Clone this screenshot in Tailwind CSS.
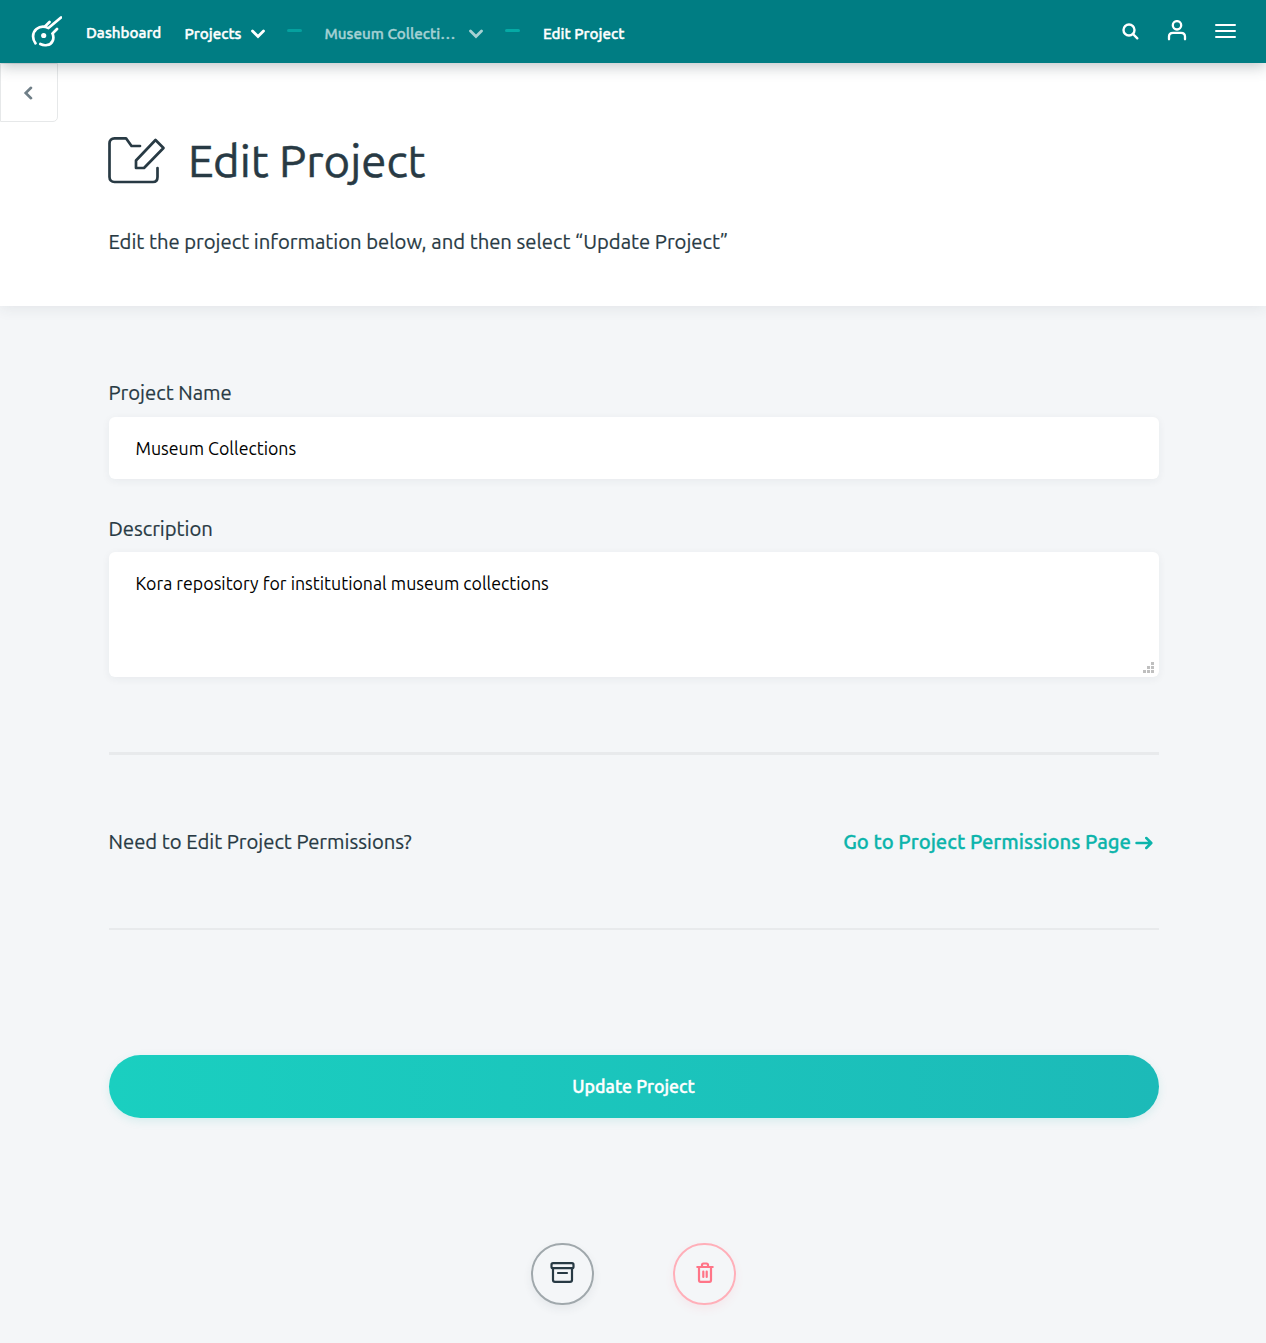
<!DOCTYPE html>
<html lang="en">
<head>
<meta charset="utf-8">
<title>Edit Project</title>
<script src="https://cdn.jsdelivr.net/npm/@tailwindcss/browser@4"></script>
</head>
<body class="min-h-[1343px] overflow-x-hidden bg-[#f4f6f8] font-[Ubuntu,'Noto_Sans',sans-serif] text-[#283a44] [-webkit-text-stroke:0.2px]">
<nav class="relative z-20 flex h-[63px] items-center bg-[#007d83] pl-[30px] pr-[30px] text-[15.19px] font-medium leading-5 whitespace-nowrap text-white shadow-[0_3px_14px_rgba(40,55,64,0.3)] [-webkit-text-stroke:0.4px]">
  <svg class="mt-px size-8" viewBox="0 0 32 32" fill="none" stroke="currentColor" stroke-width="2.700" stroke-linecap="round">
    <path d="M5.500 27.300C2 23 2.300 16.500 6.500 13C10 10.200 14.500 10.200 18.500 12L31 1.500M15.500 10L19.500 6M27 13L22.500 17.500C24.700 22.500 22.500 28.300 17 29C14.500 29.600 12.300 29 10.300 28"/>
    <circle cx="13.700" cy="19.500" r="2.600" fill="currentColor" stroke="none"/>
  </svg>
  <a class="ml-6 w-[98.500px] pt-0.5"><span>Dashboard</span></a>
  <a class="flex w-[102.500px] items-center pt-1"><span class="w-[66.500px]">Projects</span>
    <svg class="h-[10px] w-[14px]" viewBox="0 0 14 10" fill="none" stroke="currentColor" stroke-width="2.800" stroke-linecap="round"><path d="M1.500 2L7 7.600L12.500 2"/></svg></a>
  <span class="mb-[3px] h-[3px] w-[15px] rounded-full bg-[#05a19f]"></span>
  <a class="ml-[22.500px] flex items-center pt-1 text-[#a6d1d3]"><span class="w-[144.500px]">Museum Collecti…</span>
    <svg class="h-[10px] w-[14px]" viewBox="0 0 14 10" fill="none" stroke="currentColor" stroke-width="2.800" stroke-linecap="round"><path d="M1.500 2L7 7.600L12.500 2"/></svg></a>
  <span class="mb-[3px] ml-[22px] h-[3px] w-[15px] rounded-full bg-[#05aaa5]"></span>
  <a class="ml-[23px] pt-1"><span>Edit Project</span></a>
  <div class="ml-auto flex items-center">
    <svg class="size-[17px]" viewBox="0 0 17 17" fill="none" stroke="currentColor" stroke-width="2.400" stroke-linecap="round"><circle cx="7" cy="7" r="5.500"/><path d="M11 11L15.300 15.300"/></svg>
    <svg class="mb-[2px] ml-[28.500px] h-[21px] w-5" viewBox="0 0 20 21" fill="none" stroke="currentColor" stroke-width="2.300" stroke-linecap="round"><circle cx="10" cy="5.300" r="4.200"/><path d="M2 19.300V16.500C2 14 3.500 12.800 6 12.800H14C16.500 12.800 18 14 18 16.500V19.300"/></svg>
    <svg class="mb-[2px] ml-[27px] h-4 w-[22px]" viewBox="0 0 22 16" stroke="currentColor" stroke-width="2" stroke-linecap="round"><path d="M2 2H21M2 8H21M2 14H21"/></svg>
  </div>
</nav>
<header class="relative z-10 flex h-[243px] bg-white shadow-[0_2px_14px_rgba(40,55,64,0.09)]">
  <a class="flex h-[59px] w-[58px] shrink-0 items-center justify-center rounded-br-[5px] border border-[#e6e8e9] pr-0.5 text-[#6f7e87]">
    <svg class="h-[14px] w-[10px]" viewBox="0 0 10 14" fill="none" stroke="currentColor" stroke-width="2.600" stroke-linecap="round"><path d="M8 1.800L2.700 7L8 12.200"/></svg>
  </a>
  <div class="pl-[50.400px] pt-[65px]">
    <h1 class="flex h-[64px] items-center text-[45.560px] leading-[64px] whitespace-nowrap [-webkit-text-stroke:0.5px]">
      <svg class="mr-[21.500px] h-[48px] w-[58px]" viewBox="0 0 58 48" fill="none" stroke="currentColor" stroke-width="2.700" stroke-linecap="round" stroke-linejoin="round"><path d="M32 10H23.500L18 2.300H6.500C3.500 2.300 1.500 4.300 1.500 7.300V41C1.500 44 3.500 46 6.500 46H45C48 46 49.500 44 49.500 41V32M47.500 4L55.500 12L36 32H28V24.500Z"/></svg>
      <span class="pt-0.5">Edit Project</span>
    </h1>
    <p class="mt-[36px] text-[20.250px] leading-7 whitespace-nowrap">Edit the project information below, and then select “Update Project”</p>
  </div>
</header>
<main class="ml-[108.500px] w-[1050px] pt-[73px]">
  <label class="block h-7 text-[20.250px] leading-7">Project Name</label>
  <div class="mt-[10px] flex h-[62px] items-center rounded-[6px] bg-white pl-[27px] text-[17.750px] text-black shadow-[0_2px_8px_rgba(40,55,64,0.06)] [-webkit-text-stroke:0]"><span>Museum Collections</span></div>
  <label class="mt-9 block h-7 text-[20.250px] leading-7">Description</label>
  <div class="relative mt-[9px] h-[125px] rounded-[6px] bg-white pl-[27px] pt-[19px] text-[17.750px] leading-6 text-black shadow-[0_2px_8px_rgba(40,55,64,0.06)] [-webkit-text-stroke:0]"><span>Kora repository for institutional museum collections</span>
    <svg class="absolute bottom-1 right-[4.500px] h-[11px] w-[11px]" viewBox="0 0 11 11" fill="#bfbfbf"><path d="M8 0h3v3H8zM4 4h3v3H4zM8 4h3v3H8zM0 8h3v3H0zM4 8h3v3H4zM8 8h3v3H8z"/></svg>
  </div>
  <div class="mt-[75px] h-[3px] bg-[#e8eaec]"></div>
  <div class="flex h-[173px] items-center justify-between text-[20.250px] leading-7 whitespace-nowrap"><span>Need to Edit Project Permissions?</span>
    <a class="flex items-center pr-[5.500px] font-medium text-[#0cb4ab] [-webkit-text-stroke:0.3px]"><span>Go to Project Permissions Page</span>
      <svg class="ml-[4px] mt-[2px] h-[14px] w-[18px]" viewBox="0 0 18 14" fill="none" stroke="currentColor" stroke-width="2.500" stroke-linecap="round" stroke-linejoin="round"><path d="M1.500 7H16M11.300 2L16.300 7L11.300 12"/></svg></a>
  </div>
  <div class="h-[2px] bg-[#e8eaec]"></div>
  <button class="mt-[125px] block h-[63px] w-full rounded-full bg-linear-to-r from-[#1acfc0] to-[#1cbab8] text-[17.750px] font-medium text-white shadow-[0_3px_10px_rgba(20,180,170,0.13)] [-webkit-text-stroke:0.4px]"><span>Update Project</span></button>
  <div class="mt-[125px] flex justify-center gap-[79px] pr-px">
    <a class="flex h-[62px] w-[63px] items-center justify-center rounded-full border-2 border-[#a0a8ac] pb-[3px] shadow-[0_4px_10px_rgba(40,55,64,0.07)]">
      <svg class="h-[21px] w-[25px]" viewBox="0 0 25 21" fill="none" stroke="currentColor" stroke-width="2.200" stroke-linecap="round" stroke-linejoin="round"><rect x="1.500" y="1.200" width="22" height="5" rx="1.500"/><path d="M3 6.500V18Q3 19.800 5 19.800H20Q22 19.800 22 18V6.500M8 11H17"/></svg></a>
    <a class="flex h-[62px] w-[63px] items-center justify-center rounded-full border-2 border-[#ffafb9] pb-[3px] pl-px text-[#ff7588] shadow-[0_4px_10px_rgba(255,80,100,0.08)]">
      <svg class="h-[21px] w-[18px]" viewBox="0 0 18 21" fill="none" stroke="currentColor" stroke-width="2.200" stroke-linecap="round" stroke-linejoin="round"><path d="M1.300 5H16.700M3 5V18Q3 19.800 4.500 19.800H13.500Q15 19.800 15 18V5M6 5V3Q6 1.500 7.500 1.500H10.500Q12 1.500 12 3V5M7.300 9.500V15M10.700 9.500V15"/></svg></a>
  </div>
</main>
</body>
</html>
